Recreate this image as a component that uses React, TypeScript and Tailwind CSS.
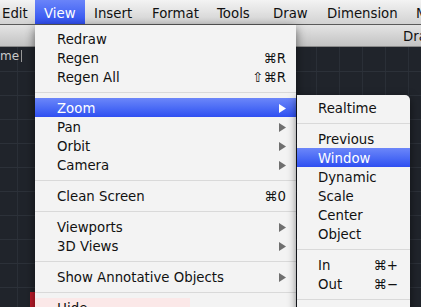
import React from "react";

type Item =
  | { sep: true }
  | { label: string; sc?: string; sub?: boolean; active?: boolean; sep?: false };

const FONT = { fontFamily: '"DejaVu Sans", "Liberation Sans", sans-serif' };

const mainItems: Item[] = [
  { label: "Redraw" },
  { label: "Regen", sc: "⌘R" },
  { label: "Regen All", sc: "⇧⌘R" },
  { sep: true },
  { label: "Zoom", sub: true, active: true },
  { label: "Pan", sub: true },
  { label: "Orbit", sub: true },
  { label: "Camera", sub: true },
  { sep: true },
  { label: "Clean Screen", sc: "⌘0" },
  { sep: true },
  { label: "Viewports", sub: true },
  { label: "3D Views", sub: true },
  { sep: true },
  { label: "Show Annotative Objects", sub: true },
  { sep: true },
  { label: "Hide" },
];

const subItems: Item[] = [
  { label: "Realtime" },
  { sep: true },
  { label: "Previous" },
  { label: "Window", active: true },
  { label: "Dynamic" },
  { label: "Scale" },
  { label: "Center" },
  { label: "Object" },
  { sep: true },
  { label: "In", sc: "⌘+" },
  { label: "Out", sc: "⌘−" },
  { sep: true },
];

function Arrow({ white }: { white?: boolean }) {
  return (
    <svg width="7" height="9" viewBox="0 0 7 9" className="shrink-0">
      <path d="M0 0 L7 4.5 L0 9 Z" fill={white ? "#ffffff" : "#6f6f6f"} />
    </svg>
  );
}

function Sep() {
  return (
    <div className="h-[12px] flex items-center">
      <div className="h-px w-full bg-[#d9d9d9]" />
    </div>
  );
}

function Row({ item, padL, padR, pink }: { item: Extract<Item, { label: string }>; padL: string; padR: string; pink?: boolean }) {
  const active = item.active;
  return (
    <div
      className={
        "h-[19px] flex items-center pt-[2px] text-[13.3px] leading-[17px] " +
        padL +
        " " +
        padR +
        (active
          ? " bg-gradient-to-b from-[#6c86f9] to-[#2f4ef1] text-white"
          : pink
          ? " bg-[linear-gradient(to_right,#fbe8e8_155px,transparent_155px)] text-[#111111]"
          : " text-[#111111]")
      }
    >
      <span className="flex-1 whitespace-nowrap">{item.label}</span>
      {item.sc && <span className="whitespace-nowrap">{item.sc}</span>}
      {item.sub && <Arrow white={active} />}
    </div>
  );
}

function Grid() {
  const v: number[] = [];
  for (let x = 17; x < 421; x += 23) v.push(x);
  const h: number[] = [];
  for (let y = 24; y < 260; y += 24) h.push(y);
  return (
    <svg className="absolute inset-0" width="421" height="260">
      {v.map((x) => (
        <line key={"v" + x} x1={x + 0.5} y1="0" x2={x + 0.5} y2="260" stroke="#2a2f37" strokeWidth="1" />
      ))}
      {h.map((y) => (
        <line key={"h" + y} x1="0" y1={y + 0.5} x2="421" y2={y + 0.5} stroke="#2c3139" strokeWidth="1" />
      ))}
    </svg>
  );
}

const bar = [
  { label: "Edit", w: "w-[35px]", pl: "pl-[2px]" },
  { label: "View", w: "w-[50px]", pl: "pl-[9px]", active: true },
  { label: "Insert", w: "w-[58px]", pl: "pl-[9px]" },
  { label: "Format", w: "w-[65px]", pl: "pl-[9px]" },
  { label: "Tools", w: "w-[56px]", pl: "pl-[9px]" },
  { label: "Draw", w: "w-[54px]", pl: "pl-[9px]" },
  { label: "Dimension", w: "w-[89px]", pl: "pl-[9px]" },
  { label: "Modify", w: "w-[60px]", pl: "pl-[9px]" },
];

export default function App() {
  return (
    <div className="relative w-[421px] h-[307px] overflow-hidden bg-[#20242b]" style={FONT}>
      {/* menu bar */}
      <div className="flex h-[25px] border-b border-[#5a5a5a] bg-gradient-to-b from-[#f3f3f3] to-[#d2d2d2] whitespace-nowrap">
        {bar.map((b) => (
          <div
            key={b.label}
            className={
              "shrink-0 h-full flex items-center pt-[3px] text-[13.3px] " +
              b.w +
              " " +
              b.pl +
              (b.active ? " bg-gradient-to-b from-[#6a84f9] to-[#2f4df0] text-white" : " text-[#111111]")
            }
          >
            {b.label}
          </div>
        ))}
      </div>
      {/* window title bar */}
      <div className="h-[22px] flex items-center justify-end pt-[3px] bg-gradient-to-b from-[#e4e4e4] to-[#c3c3c3] border-b border-[#8a8a8a] text-[13.3px] text-[#111111] whitespace-nowrap">
        <span className="pl-[403px] w-full">Drawing</span>
      </div>
      {/* canvas */}
      <div className="relative h-[260px] flex flex-col">
        <Grid />
        <div className="relative flex items-center text-[12px] text-[#c9c9c9]">
          <span>me</span>
          <span className="ml-[2px] h-[12px] w-px bg-[#9a9a9a]" />
        </div>
        <div className="relative mt-auto ml-[30px] w-[5px] h-[15px] bg-[#c11a2a]" />
      </div>

      {/* View menu */}
      <div className="absolute left-[35px] top-[25px] w-[261px] h-[300px] bg-[#f3f3f3] pt-[4px] shadow-[0_3px_10px_rgba(0,0,0,0.55)]">
        {mainItems.map((it, i) =>
          "label" in it ? (
            <Row key={i} item={it} padL="pl-[22px]" padR="pr-[10px]" pink={it.label === "Hide"} />
          ) : (
            <Sep key={i} />
          )
        )}
      </div>

      {/* Zoom submenu */}
      <div className="absolute left-[297px] top-[95px] w-[113px] h-[230px] bg-[#f3f3f3] pt-[3px] rounded-tr-[5px] shadow-[0_3px_10px_rgba(0,0,0,0.55)]">
        {subItems.map((it, i) =>
          "label" in it ? (
            <Row key={i} item={it} padL="pl-[21px]" padR="pr-[12px]" />
          ) : (
            <Sep key={i} />
          )
        )}
      </div>
    </div>
  );
}
